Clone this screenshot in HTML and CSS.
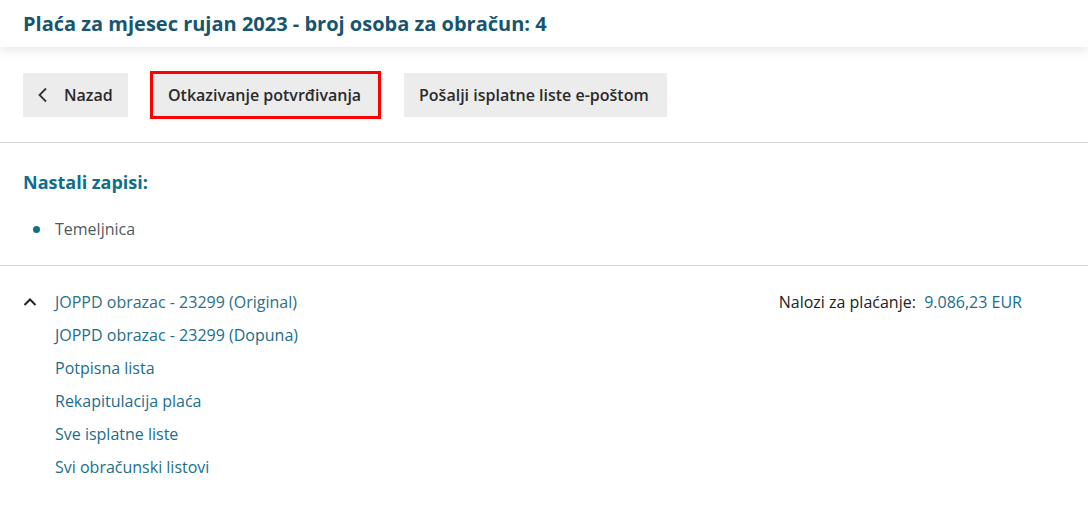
FILE: index.html
```html
<!DOCTYPE html>
<html lang="hr">
<head>
<meta charset="utf-8">
<title>Plaća</title>
<link rel="stylesheet" href="styles.css">
</head>
<body>
<header class="topbar">
  <h1 class="title">Plaća za mjesec rujan 2023 - broj osoba za obračun: 4</h1>
</header>
<section class="actions">
  <button class="btn btn-back"><svg class="chev" width="12" height="16" viewBox="0 0 12 16"><path d="M9 1.5 L2.5 8 L9 14.5" fill="none" stroke="#333" stroke-width="1.8"/></svg>Nazad</button>
  <span class="highlight"><button class="btn">Otkazivanje potvrđivanja</button></span>
  <button class="btn btn-mail">Pošalji isplatne liste e-poštom</button>
</section>
<section class="records">
  <h2 class="records-title">Nastali zapisi:</h2>
  <ul class="bullets">
    <li><span class="dot"></span>Temeljnica</li>
  </ul>
</section>
<section class="docs">
  <div class="doc-list">
    <div class="doc-row"><svg class="up" width="14" height="10" viewBox="0 0 14 10"><path d="M1.5 8 L7 2.5 L12.5 8" fill="none" stroke="#222" stroke-width="2"/></svg><a class="link">JOPPD obrazac - 23299 (Original)</a></div>
    <div class="doc-row"><a class="link">JOPPD obrazac - 23299 (Dopuna)</a></div>
    <div class="doc-row"><a class="link">Potpisna lista</a></div>
    <div class="doc-row"><a class="link">Rekapitulacija plaća</a></div>
    <div class="doc-row"><a class="link">Sve isplatne liste</a></div>
    <div class="doc-row"><a class="link">Svi obračunski listovi</a></div>
  </div>
  <div class="payments">Nalozi za plaćanje:&nbsp; <a class="link">9.086,23 EUR</a></div>
</section>
</body>
</html>
```
FILE: styles.css
```css
* { box-sizing: border-box; }
html, body { margin: 0; padding: 0; background: #fff; }
body { font-family: "Open Sans", "Liberation Sans", sans-serif; color: #333; width: 1088px; height: 507px; overflow: hidden; }
.topbar { height: 47px; background: #fff; box-shadow: 0 4px 10px rgba(0,0,0,0.09); display: flex; align-items: center; padding: 0 23px; position: relative; z-index: 1; }
.title { margin: 0; font-size: 20px; font-weight: 700; color: #17556f; line-height: 1; }
.actions { display: flex; align-items: center; height: 96px; padding: 0 23px; border-bottom: 1px solid #d4d4d4; }
.btn { font-family: inherit; font-size: 16px; font-weight: 600; color: #2a2a2a; background: #ececec; border: none; height: 44px; padding: 0 15px; display: flex; align-items: center; cursor: pointer; white-space: nowrap; }
.btn-back { padding: 0 15px 0 14px; width: 105px; }
.chev { margin-right: 15px; }
.highlight { display: inline-flex; border: 3px solid #f00; margin-left: 22px; }
.highlight .btn { height: 42px; padding: 0 15px; width: 225px; }
.btn-mail { margin-left: 23px; width: 263px; }
.records { padding: 27px 23px 25px; border-bottom: 1px solid #d4d4d4; }
.records-title { margin: 0; font-size: 18px; font-weight: 700; color: #0e6e8e; line-height: 24px; }
.bullets { list-style: none; margin: 24px 0 0; padding: 0; }
.bullets li { display: flex; align-items: center; font-size: 16px; line-height: 22px; color: #4f5a60; }
.dot { width: 7px; height: 7px; border-radius: 50%; background: #0e6e8e; margin: 0 15px 0 10px; }
.docs { display: flex; justify-content: space-between; padding: 25px 66px 0 23px; }
.doc-list { display: flex; flex-direction: column; }
.doc-row { height: 33px; display: flex; align-items: flex-start; padding-left: 32px; position: relative; font-size: 16px; line-height: 22px; }
.up { position: absolute; left: 0; top: 6px; }
.link { color: #1b6e8c; text-decoration: none; }
.doc-row:first-child .link { color: #2c6f87; }
.payments { font-size: 16px; line-height: 22px; color: #222; }
```
